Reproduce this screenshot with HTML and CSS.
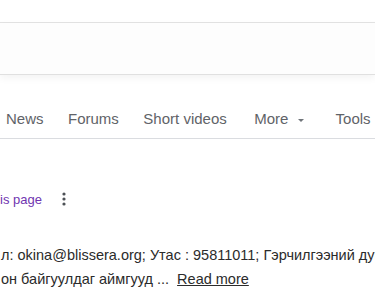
FILE: index.html
```html
<!DOCTYPE html>
<html lang="mn">
<head>
    <meta charset="UTF-8">
    <title>Search results</title>
    <link rel="stylesheet" href="styles.css">
</head>
<body>

    <div class="topbar"></div>

    <div class="searchbar"></div>

    <nav class="tabs">
        <a class="tab" href="#">News</a>
        <a class="tab" href="#">Forums</a>
        <a class="tab" href="#">Short videos</a>
        <a class="tab tab-more" href="#">More <span class="caret"></span></a>
        <a class="tab tab-tools" href="#">Tools</a>
    </nav>

    <div class="result">
        <div class="result-meta">
            <span class="translate">is page</span>
            <span class="kebab">
                <svg width="4" height="14" viewBox="0 0 4 14">
                    <circle cx="2" cy="2" r="1.6" fill="#4d5156"/>
                    <circle cx="2" cy="7" r="1.6" fill="#4d5156"/>
                    <circle cx="2" cy="12" r="1.6" fill="#4d5156"/>
                </svg>
            </span>
        </div>

        <div class="snippet">
            <div class="snippet-line">л: okina@blissera.org; Утас : 95811011; Гэрчилгээний дугаар</div>
            <div class="snippet-line">он байгуулдаг аймгууд ... &nbsp;<a class="read-more" href="#">Read more</a></div>
        </div>
    </div>

</body>
</html>
```

FILE: styles.css
```css
body {
    font-family: 'Liberation Sans', Arial, sans-serif;
    background-color: #ffffff;
    margin: 0;
    overflow: hidden;
    width: 375px;
    height: 293px;
}

.topbar {
    height: 22px;
    border-bottom: 1px solid #e3e3e3;
}

.searchbar {
    height: 51px;
    background: #fdfdfd;
    border-bottom: 1px solid #e0e0e0;
    box-shadow: 0 3px 8px rgba(0, 0, 0, 0.05);
}

.tabs {
    display: flex;
    align-items: flex-end;
    height: 52px;
    padding-bottom: 10px;
    margin-top: 1px;
    border-bottom: 1px solid #dadce0;
    white-space: nowrap;
}

.tab {
    color: #5f6368;
    font-size: 15px;
    line-height: 18px;
    text-decoration: none;
    margin-left: 24.5px;
}

.tab:first-child {
    margin-left: 6px;
}

.tab-more {
    margin-left: 27.5px;
}

.tab-tools {
    margin-left: 32px;
}

.caret {
    display: inline-block;
    width: 0;
    height: 0;
    margin-left: 5px;
    vertical-align: middle;
    border-left: 3px solid transparent;
    border-right: 3px solid transparent;
    border-top: 3px solid #70757a;
}

.result {
    padding-top: 49px;
}

.result-meta {
    display: flex;
    align-items: center;
    height: 22px;
}

.translate {
    color: #7035b0;
    font-size: 13px;
}

.kebab {
    display: flex;
    margin-left: 20px;
}

.snippet {
    margin-top: 33px;
    color: #2b2b2b;
    font-size: 14.5px;
    line-height: 24px;
    white-space: nowrap;
}

.snippet-line {
    padding-left: 1px;
}

.read-more {
    color: #2b2b2b;
    text-decoration: underline;
}
```
